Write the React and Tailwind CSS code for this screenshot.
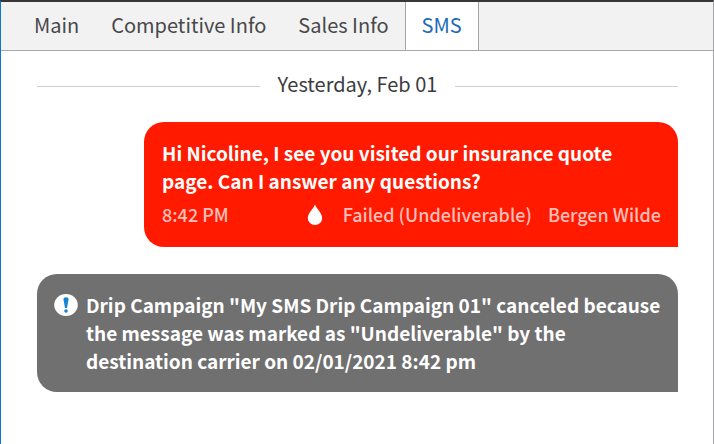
const tabs = ['Main', 'Competitive Info', 'Sales Info', 'SMS'];

function TabBar({ active }) {
  return (
    <nav className="flex h-[49px] border-b border-[#a9a9ab] bg-[#f2f2f2] pl-[17px] text-[20px] leading-[45px]">
      {tabs.map((tab) => (
        <button
          key={tab}
          type="button"
          className={
            tab === active
              ? 'border-x border-[#a4a4a7] bg-white px-4 pb-[3px] text-[#1b6cb5]'
              : 'px-4 pb-[3px] text-[#48484a]'
          }
        >
          {tab}
        </button>
      ))}
    </nav>
  );
}

function DateDivider({ children }) {
  return (
    <div className="flex items-center gap-[18px] text-[20px] leading-7 text-[#3c3c3e]">
      <span className="h-px flex-1 bg-[#d0d0d0]" />
      <h2 className="pb-1">{children}</h2>
      <span className="h-px flex-1 bg-[#d0d0d0]" />
    </div>
  );
}

function DropIcon() {
  return (
    <svg width="16" height="22" viewBox="0 0 16 22" fill="#fff" aria-hidden="true">
      <path d="M8 1.500C7 5 .8 10 .8 15A7.200 7 0 0 0 15.200 15C15.200 10 9 5 8 1.500Z" />
    </svg>
  );
}

function AlertIcon() {
  return (
    <svg width="24" height="24" viewBox="0 0 24 24" className="shrink-0" aria-hidden="true">
      <ellipse cx="12" cy="12" rx="11.800" ry="11" fill="#fff" />
      <path d="M9.400 6Q9.400 4.300 12 4.300T14.600 6L13 15H11Z" fill="#1684d2" />
      <circle cx="12" cy="18" r="1.800" fill="#1684d2" />
    </svg>
  );
}

export default function App() {
  return (
    <div className="min-h-screen border-t-2 border-r border-l border-t-[#3a3637] border-r-[#a3a3a8] border-l-[#0a78d4] bg-white font-['Noto_Sans_CJK_SC','Liberation_Sans',sans-serif]">
      <TabBar active="SMS" />
      <main className="flex flex-col pt-[19px] pr-[35px] pb-10 pl-9">
        <DateDivider>Yesterday, Feb 01</DateDivider>
        <article className="mt-5 ml-[107px] rounded-[20px] rounded-br-none bg-[#ff1a00] pt-[17px] pr-[17px] pb-[21px] pl-[18px] text-white">
          <p className="text-[19px] leading-7 font-bold">
            Hi Nicoline, I see you visited our insurance quote page. Can I answer any questions?
          </p>
          <footer className="mt-[7px] flex items-center text-[18px] leading-6 font-medium text-[#ffbfb8]">
            <time>8:42 PM</time>
            <span className="ml-auto flex items-center">
              <DropIcon />
              <span className="ml-5">Failed (Undeliverable)</span>
              <span className="ml-4">Bergen Wilde</span>
            </span>
          </footer>
        </article>
        <article className="mt-[27px] flex gap-2 rounded-[20px] rounded-br-none bg-[#707070] py-[17px] pr-3 pl-[17px] text-white">
          <div className="flex h-7 items-center">
            <AlertIcon />
          </div>
          <p className="text-[19px] leading-7 font-bold">
            Drip Campaign "My SMS Drip Campaign 01" canceled because the message was marked as
            "Undeliverable" by the destination carrier on 02/01/2021 8:42 pm
          </p>
        </article>
      </main>
    </div>
  );
}
